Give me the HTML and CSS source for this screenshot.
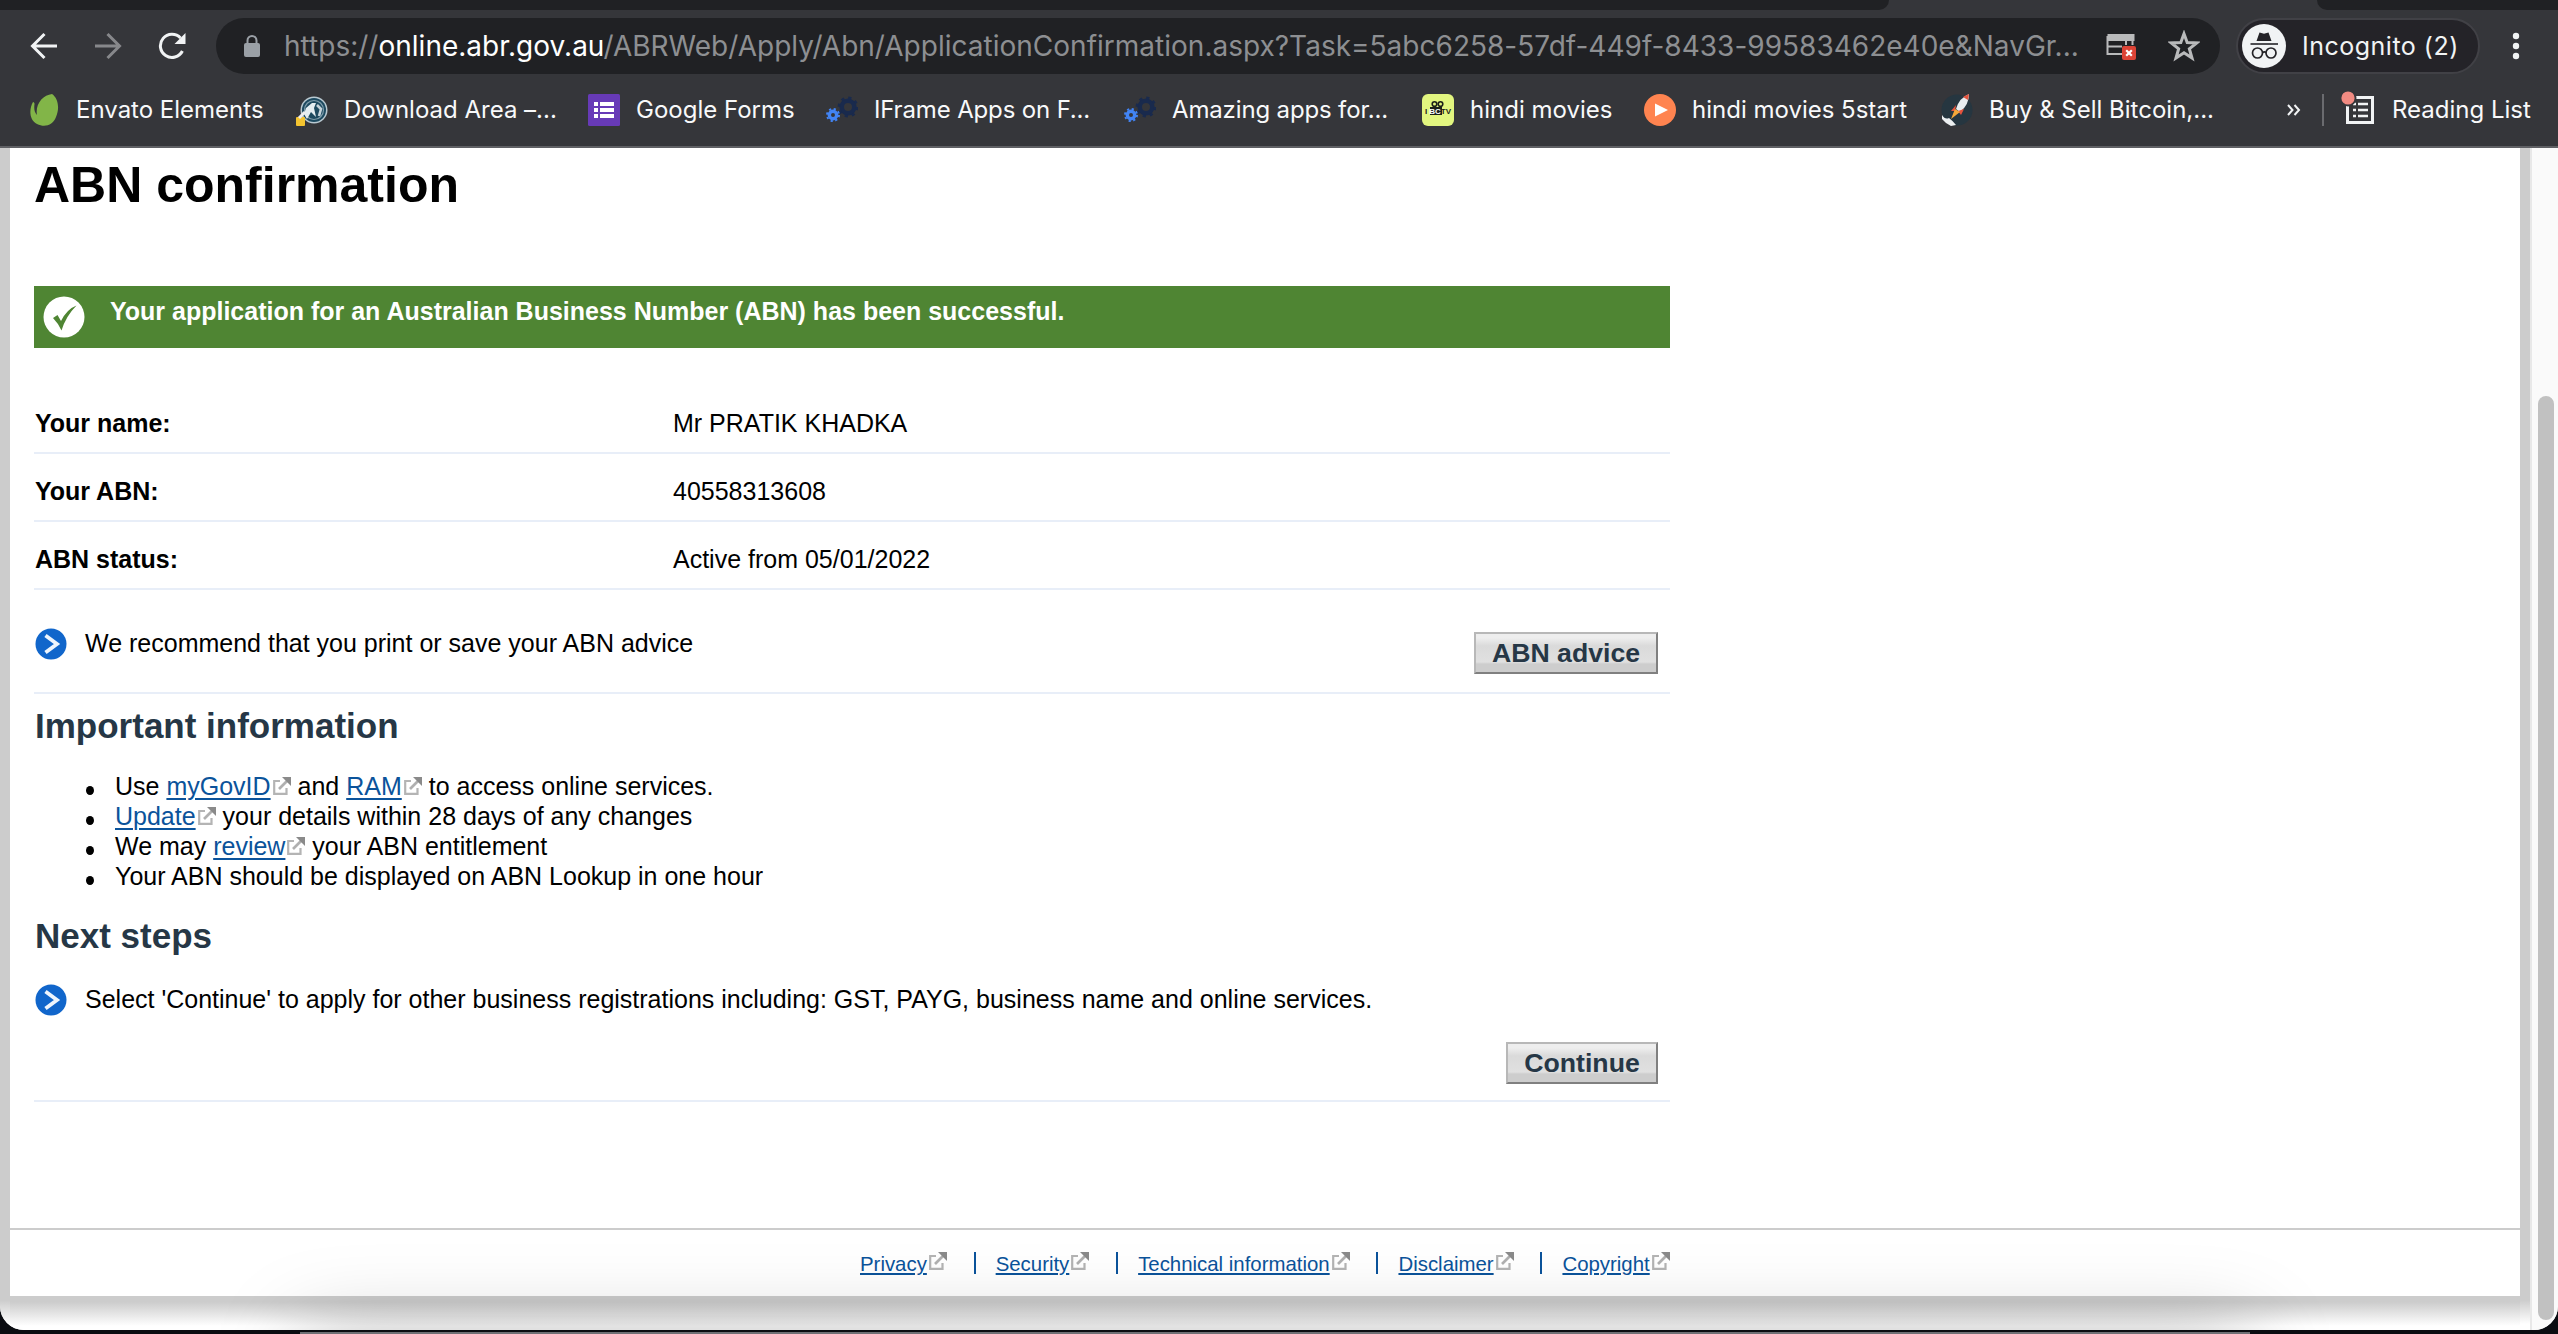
FILE: index.html
```html
<!DOCTYPE html>
<html lang="en">
<head>
<meta charset="utf-8">
<title>ABN confirmation</title>
<link rel="stylesheet" href="styles.css">
</head>
<body>
<svg width="0" height="0" class="defs">
  <symbol id="ext" viewBox="0 0 18 18">
    <path d="M7 4H1.2V16.8H13.5V11" fill="none" stroke="#b4b4b4" stroke-width="2.2"/>
    <path d="M6 12L14 4" stroke="#b0b0b0" stroke-width="2.6"/>
    <path d="M9 0H18V9L15 6L12 3Z" fill="#8a8a8a"/>
  </symbol>
  <symbol id="gears" viewBox="0 0 32 32">
    <circle cx="22" cy="13" r="6.3" fill="none" stroke="#192a4d" stroke-width="4.6"/>
    <circle cx="22" cy="13" r="9.2" fill="none" stroke="#192a4d" stroke-width="2.4" stroke-dasharray="3.2 4.02"/>
    <circle cx="7" cy="21" r="3.7" fill="none" stroke="#4284f4" stroke-width="3.4"/>
    <circle cx="7" cy="21" r="6" fill="none" stroke="#4284f4" stroke-width="2" stroke-dasharray="2.2 2.51"/>
  </symbol>
  <symbol id="chevron" viewBox="0 0 32 32">
    <circle cx="16" cy="16" r="15.5" fill="#1166cb"/>
    <path d="M10.5 7.5L22 16L10.5 24.5" fill="none" stroke="#eef5fd" stroke-width="3.8"/>
  </symbol>
</svg>
<div class="window">
  <div class="tabstrip"><div class="tab-left"></div><div class="tab-right"></div></div>
  <div class="toolbar">
    <svg class="nav" viewBox="0 0 28 28"><path d="M27 14H3M14.5 2L2.5 14L14.5 26" fill="none" stroke="#f1f3f4" stroke-width="3"/></svg>
    <svg class="nav" viewBox="0 0 28 28"><path d="M1 14H25M13.5 2L25.5 14L13.5 26" fill="none" stroke="#87888b" stroke-width="3"/></svg>
    <svg class="nav" viewBox="0 0 28 28"><path d="M24.4 19A11.6 11.6 0 1 1 22.5 6" fill="none" stroke="#f1f3f4" stroke-width="3"/><path d="M27.5 1V12H16.5Z" fill="#f1f3f4"/></svg>
    <div class="omnibox">
      <svg class="lock" viewBox="0 0 16 22"><rect y="8" width="16" height="14" rx="2" fill="#9aa0a6"/><path d="M3.5 9V5.5a4.5 4.5 0 0 1 9 0V9" fill="none" stroke="#9aa0a6" stroke-width="2"/></svg>
      <span class="url">https://<b>online.abr.gov.au</b>/ABRWeb/Apply/Abn/ApplicationConfirmation.aspx?Task=5abc6258-57df-449f-8433-99583462e40e&amp;NavGr...</span>
      <svg class="card" viewBox="0 0 32 30"><path d="M2.500 3H27.500V8H2.500ZM1.500 4V22H16M2 14.500H16M20 8V13M26.500 8V13" fill="none" stroke="#b9babb" stroke-width="2"/><path d="M2 2H28V8H2Z" fill="#b9babb"/><rect x="16" y="14" width="14" height="14" rx="2" fill="#dc4437"/><path d="M20.2 18.2l5.6 5.6M25.8 18.2l-5.6 5.6" stroke="#fff" stroke-width="2.2"/></svg>
      <svg class="star" viewBox="0 0 30 30"><path d="M15 3.5L18 11.8L27 12.1L20 17.6L22.5 26.3L15 21.3L7.5 26.3L10 17.6L3 12.1L12 11.8Z" fill="none" stroke="#b9babb" stroke-width="2.8"/></svg>
    </div>
    <div class="chip">
      <svg class="avatar" viewBox="0 0 44 44"><circle cx="22" cy="22" r="22" fill="#f1f3f4"/><path d="M14.5 17L17.5 8.5L22 9.8L26.5 8.5L29.5 17Z" fill="#242327"/><path d="M8.5 20H36" stroke="#242327" stroke-width="1.6"/><circle cx="15.5" cy="29" r="5" fill="none" stroke="#242327" stroke-width="1.7"/><circle cx="29" cy="29" r="5" fill="none" stroke="#242327" stroke-width="1.7"/><path d="M20.5 28.5q1.8-1.4 3.6 0" fill="none" stroke="#242327" stroke-width="1.7"/></svg>
      <span>Incognito (2)</span>
    </div>
    <svg class="dots" viewBox="0 0 8 28"><circle cx="4" cy="4" r="3.2"/><circle cx="4" cy="14" r="3.2"/><circle cx="4" cy="24" r="3.2"/></svg>
  </div>
  <div class="bookmarks">
    <div class="bm"><svg viewBox="0 0 32 32"><path d="M24 0C30 4 32 14 28 23C25 31 17 34 9 30C1 26 1 15 5 8C6 8 6.500 9 6.500 10C6 14 6 18 9 21C7 10 15 1 24 0Z" fill="#82b548"/></svg><span>Envato Elements</span></div>
    <div class="bm"><svg viewBox="0 0 32 32"><circle cx="18" cy="16" r="13.500" fill="#b9c9d1"/><circle cx="18" cy="16" r="12" fill="#1d4a60"/><circle cx="18" cy="16" r="9.500" fill="none" stroke="#7f9dab" stroke-width="1.200"/><path d="M10 14L16 9L20 9L18 14L20 23L15 18L11 25L8 20Z" fill="#e3edf1"/><path d="M21 11l4 4-2 7" fill="none" stroke="#c5d3da" stroke-width="2.600"/><rect y="23" width="9" height="9" rx="1" fill="#f4c430"/><path d="M3 24L9 18" stroke="#eee" stroke-width="3"/></svg><span>Download Area –...</span></div>
    <div class="bm"><svg viewBox="0 0 32 32"><rect width="32" height="32" rx="1.500" fill="#673ab7"/><path d="M6 8h4v4H6zM12 8h14v4H12zM6 14h4v4H6zM12 14h14v4H12zM6 20h4v4H6zM12 20h14v4H12z" fill="#fff"/></svg><span>Google Forms</span></div>
    <div class="bm"><svg viewBox="0 0 32 32"><use href="#gears"/></svg><span class="tight">IFrame Apps on F...</span></div>
    <div class="bm"><svg viewBox="0 0 32 32"><use href="#gears"/></svg><span class="tight">Amazing apps for...</span></div>
    <div class="bm"><svg viewBox="0 0 32 32"><rect width="32" height="32" rx="6" fill="#e2f67f"/><circle cx="12.500" cy="10" r="2.300" fill="none" stroke="#1c211a" stroke-width="1.600"/><circle cx="18.500" cy="10" r="2.300" fill="none" stroke="#1c211a" stroke-width="1.600"/><path d="M8 13H20V21H8Z" fill="#1c211a"/><text x="3" y="20" class="tiny" fill="#1c211a">I<tspan dx="2" fill="#fff">BC</tspan>TV</text></svg><span>hindi movies</span></div>
    <div class="bm"><svg viewBox="0 0 32 32"><circle cx="16" cy="16" r="16" fill="#ff8450"/><path d="M11 9.500L24 16L11 22.500Z" fill="#fff"/></svg><span>hindi movies 5start</span></div>
    <div class="bm"><svg viewBox="0 0 32 32"><circle cx="16" cy="16" r="15.500" fill="#263640"/><path d="M28 0Q18 4 15 15L19 18Q28 11 28 0Z" fill="#e8edf0"/><path d="M28 0L22 3L27 6Z" fill="#e5533d"/><path d="M15 11L10 17L14 17ZM23 15L20 21L17 17Z" fill="#e5533d"/><path d="M14 15L10 25L19 18Z" fill="#f5a83a"/><path d="M1 21Q4 26 8 24Q12 27 15 31L10 32Q4 29 1 25Z" fill="#eceff1"/></svg><span>Buy &amp; Sell Bitcoin,...</span></div>
    <svg class="more" viewBox="0 0 14 12"><path d="M1 1l4.500 5L1 11M7.500 1L12 6l-4.500 5" fill="none" stroke="#f1f3f4" stroke-width="2"/></svg>
    <div class="reading"><svg viewBox="0 0 34 34"><rect x="6.500" y="6.500" width="25" height="25" fill="none" stroke="#f1f3f4" stroke-width="3"/><path d="M12 13h3M17 13h10M12 19h3M17 19h10M12 25h3M17 25h10" stroke="#f1f3f4" stroke-width="2.400"/><circle cx="7" cy="7" r="8.500" fill="#35363a"/><circle cx="7" cy="7" r="6.600" fill="#f28b82"/></svg><span>Reading List</span></div>
  </div>
  <div class="viewport">
    <div class="page">
      <main>
        <h1>ABN confirmation</h1>
        <div class="banner"><svg viewBox="0 0 42 42"><circle cx="21" cy="21" r="20.500" fill="#fff"/><path d="M10 22L14.500 19L18 25Q24 13 33.500 9.500Q23 20 18.500 34.500Q15 27 10 22Z" fill="#4f8533"/></svg><span>Your application for an Australian Business Number (ABN) has been successful.</span></div>
        <dl>
          <div><dt>Your name:</dt><dd>Mr PRATIK KHADKA</dd></div>
          <div><dt>Your ABN:</dt><dd>40558313608</dd></div>
          <div><dt>ABN status:</dt><dd>Active from 05/01/2022</dd></div>
        </dl>
        <div class="advice"><svg class="chev"><use href="#chevron"/></svg><span>We recommend that you print or save your ABN advice</span><button class="btn-advice">ABN advice</button></div>
        <h2>Important information</h2>
        <ul>
          <li>Use <a>myGovID</a><svg class="ext"><use href="#ext"/></svg> and <a>RAM</a><svg class="ext"><use href="#ext"/></svg> to access online services.</li>
          <li><a>Update</a><svg class="ext"><use href="#ext"/></svg> your details within 28 days of any changes</li>
          <li>We may <a>review</a><svg class="ext"><use href="#ext"/></svg> your ABN entitlement</li>
          <li>Your ABN should be displayed on ABN Lookup in one hour</li>
        </ul>
        <h2>Next steps</h2>
        <div class="next"><svg class="chev"><use href="#chevron"/></svg><span>Select 'Continue' to apply for other business registrations including: GST, PAYG, business name and online services.</span></div>
        <div class="actions"><button class="btn-continue">Continue</button></div>
      </main>
      <footer>
        <div><a>Privacy</a><svg class="ext"><use href="#ext"/></svg></div>
        <div><a>Security</a><svg class="ext"><use href="#ext"/></svg></div>
        <div><a>Technical information</a><svg class="ext"><use href="#ext"/></svg></div>
        <div><a>Disclaimer</a><svg class="ext"><use href="#ext"/></svg></div>
        <div><a>Copyright</a><svg class="ext"><use href="#ext"/></svg></div>
      </footer>
    </div>
    <div class="track"><div class="thumb"></div></div>
  </div>
  <div class="shade"><div class="dock"></div></div>
</div>
<div class="dock-edge"></div>
</body>
</html>
```
FILE: styles.css
```css
* { box-sizing: border-box; }
body { margin: 0; height: 1334px; overflow: hidden; background: #0a0c11; font-family: "Liberation Sans", Arial, sans-serif; font-size: 25px; line-height: 30px; color: #000; }
h1, h2, dl, dd, ul { margin: 0; padding: 0; }
svg { display: block; flex: none; }
.defs { position: absolute; }
span { white-space: nowrap; }

.window { position: relative; height: 1330px; overflow: hidden; border-radius: 0 0 24px 24px; background: #fff; }
.tabstrip { height: 10px; background: #35363a; display: flex; justify-content: space-between; }
.tab-left { width: 1889px; background: #202124; border-bottom-right-radius: 10px; }
.tab-right { width: 241px; background: #202124; border-bottom-left-radius: 10px; }

.toolbar { height: 72px; background: #35363a; display: flex; align-items: center; padding: 0 38px 0 30px; font-family: Inter, sans-serif; }
.nav { width: 28px; height: 28px; margin-right: 36px; }
.nav:nth-child(3) { margin-right: 30px; }
.omnibox { width: 2004px; height: 56px; border-radius: 28px; background: #202124; display: flex; align-items: center; padding-left: 28px; color: #8d8f92; }
.lock { width: 16px; height: 22px; margin-right: 24px; }
.url { width: 1823px; font-size: 28px; letter-spacing: 0.01px; }
.url b { font-weight: 400; color: #fff; }
.card { width: 32px; height: 30px; margin: 2px 30px 0 -1px; }
.star { width: 32px; height: 32px; }
.chip { width: 244px; height: 56px; margin-left: 16px; border: 2px solid #414146; border-radius: 28px; background: #242328; display: flex; align-items: center; padding-left: 4px; color: #f1f3f4; font-size: 25px; letter-spacing: .5px; }
.avatar { width: 44px; height: 44px; margin-right: 16px; }
.dots { width: 8px; height: 28px; margin-left: 32px; fill: #f1f3f4; }

.bookmarks { height: 66px; padding: 12px 0 22px 28px; background: #35363a; border-bottom: 2px solid #5f6064; display: grid; grid-template-columns: 268px 292px 238px 298px 298px 222px 297px 346px 35px 1fr; align-items: center; font-family: Inter, sans-serif; font-size: 24px; color: #f8f9fa; }
.bm { display: flex; align-items: center; }
.bm svg { width: 32px; height: 32px; margin-right: 16px; }
.tight { letter-spacing: -.15px; }
.tiny { font: bold 8px "Liberation Sans", sans-serif; }
.more { width: 14px; height: 12px; }
.reading { height: 32px; border-left: 2px solid #6a6b6f; display: flex; align-items: center; padding-left: 17px; }
.reading svg { width: 34px; height: 34px; margin: -4px 17px 0 0; }

.viewport { height: 1182px; display: flex; }
.page { width: 2530px; height: 1182px; border: solid #ccc; border-width: 0 10px; display: flex; flex-direction: column; border-image: linear-gradient(#ccc 1152px, #fff 1176px) 0 10; }
.page::after { content: ""; height: 34px; flex: none; background: linear-gradient(#ccc 6px, #fff 30px); }
main { height: 1080px; padding: 7px 0 0 24px; width: 1660px; }
h1 { font-size: 50px; line-height: 60px; }
.banner { margin-top: 71px; height: 62px; background: #4f8533; color: #fff; font-weight: bold; display: flex; align-items: flex-start; padding: 10px 0 0 9px; }
.banner svg { width: 42px; height: 42px; margin-right: 25px; }
dl { margin-top: 38px; }
dl div { height: 68px; padding-top: 22px; border-bottom: 2px solid #e8eef8; display: flex; }
dt { width: 639px; font-weight: bold; padding-left: 1px; }
.advice { height: 104px; padding: 38px 12px 0 1px; border-bottom: 2px solid #e8eef8; display: flex; align-items: flex-start; }
.chev { width: 32px; height: 32px; margin-right: 18px; }
button { font: bold 26.67px/38px "Liberation Sans", Arial, sans-serif; color: #263746; height: 42px; padding: 0; border: 2px solid; border-color: #b8b8b8 #808080 #808080 #b8b8b8; background: linear-gradient(#eee 4px, #dadada 12px, #e0e0e0 28px, #cdcdcd 30px, #cdcdcd); }
.btn-advice { width: 184px; margin: 4px 0 0 auto; }
.btn-continue { width: 152px; }
h2 { margin-top: 12px; padding-left: 1px; font-size: 35px; line-height: 40px; color: #263746; }
ul { margin-top: 25px; list-style: none; }
li { height: 30px; padding-left: 51px; white-space: nowrap; }
li::before { content: ""; display: inline-block; width: 8px; height: 9px; margin: 0 21px 0 1px; border-radius: 50%; background: #000; }
a { color: #0b539b; text-decoration: underline; text-decoration-thickness: 2px; text-underline-offset: 3px; }
.ext { display: inline-block; width: 18px; height: 18px; margin: 0 0 0 2px; vertical-align: 0; }
ul + h2 { margin-top: 25px; }
.next { margin-top: 28px; padding-left: 1px; display: flex; }
.actions { height: 88px; padding: 28px 12px 0 0; margin-top: -2px; border-bottom: 2px solid #e8eef8; display: flex; justify-content: flex-end; }
footer { height: 68px; border-top: 2px solid #ccc; display: flex; padding: 22px 0 0 850px; font-size: 20.4px; line-height: 24px; white-space: nowrap; }
footer div { display: flex; align-items: flex-start; }
footer div + div { margin-left: 24.8px; }
footer div + div::before { content: ""; width: 2px; height: 22px; background: #0b539b; margin-right: 20px; }
footer .ext { margin-right: 2px; }
footer a { text-underline-offset: 2px; }
.track { width: 28px; background: #fafafa; border-left: 2px solid #e8e8e8; padding: 248px 0 0 6px; }
.thumb { width: 16px; height: 924px; border-radius: 8px; background: #c1c1c1; }

/* Shadow cast by the system dock along the lower window edge */
.shade { position: absolute; inset: 1100px 0 0 0; overflow: hidden; pointer-events: none; }
.dock { position: absolute; left: 300px; right: 308px; top: 232px; height: 200px; box-shadow: 0 0 84px rgba(0,0,0,.25); }
.dock-edge { width: 1950px; height: 2px; margin: 2px 0 0 300px; background: #6f7075; }
```
